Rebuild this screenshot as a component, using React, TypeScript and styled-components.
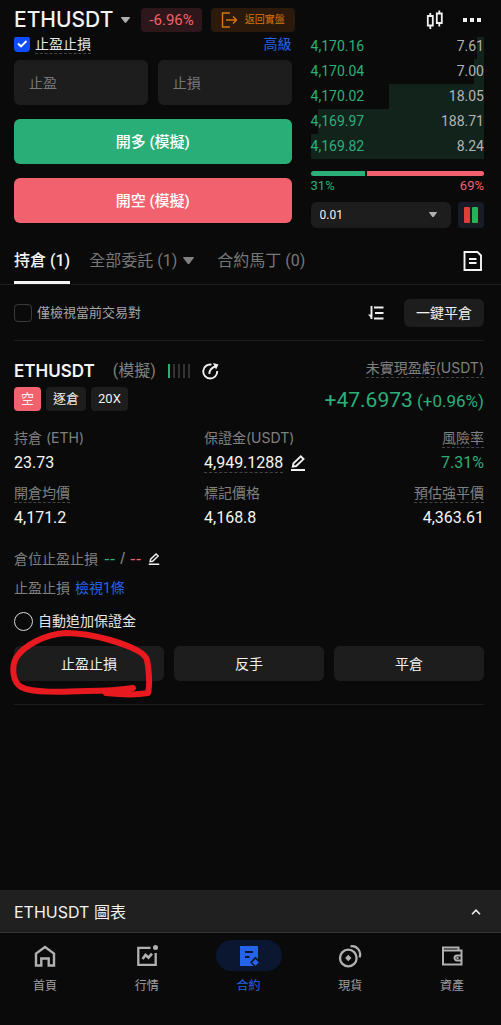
import React from "react";
import styled, { createGlobalStyle } from "styled-components";

const GlobalStyle = createGlobalStyle`
  * { box-sizing: border-box; }
  body {
    margin: 0;
    background: #0a0a0a;
    color: #f2f2f2;
    font-family: Roboto, "Noto Sans CJK TC", sans-serif;
    font-size: 14px;
    line-height: 20px;
  }
  button, input, select { font: inherit; color: inherit; }
  button { border: 0; padding: 0; background: none; cursor: pointer; }
  svg { display: block; flex: none; }
  a { text-decoration: none; }
`;

const GREEN = "#2bb07a";
const RED = "#f2616e";
const BLUE = "#2563eb";

const Page = styled.div`
  display: flex;
  flex-direction: column;
  min-height: 100vh;
`;

const Header = styled.header`
  position: sticky;
  top: 0;
  z-index: 2;
  display: flex;
  align-items: center;
  height: 37px;
  padding: 3px 20px 0 14px;
  background: #0a0a0a;
`;

const PairButton = styled.button`
  display: flex;
  align-items: center;
  gap: 8px;
  margin-right: 11px;
  font-family: Inter, sans-serif;
  font-size: 21px;
  font-weight: 500;
  line-height: 24px;
`;

const Badge = styled.span`
  padding: 0 8px;
  border-radius: 4px;
  background: #2e171b;
  color: ${RED};
  font-size: 15px;
  line-height: 24px;
`;

const LiveButton = styled.button`
  display: flex;
  align-items: center;
  gap: 7px;
  height: 24px;
  margin-left: 9px;
  padding: 0 10px;
  border-radius: 4px;
  background: #2b1a0c;
  color: #d9730d;
  font-size: 10px;
`;

const HeaderTools = styled.div`
  display: flex;
  align-items: center;
  gap: 19px;
  margin-left: auto;
`;

const IconButton = styled.button`
  display: flex;
  align-items: center;
`;

const Trade = styled.section`
  display: grid;
  grid-template-columns: 8fr 5fr;
  gap: 19px;
  margin-top: -3px;
  padding: 0 17px 0 14px;
`;

const OrderForm = styled.form`
  display: flex;
  flex-direction: column;
  min-width: 0;
`;

const Between = styled.div`
  display: flex;
  align-items: center;
  justify-content: space-between;
`;

const CheckLabel = styled.label<{ $small?: boolean }>`
  display: flex;
  align-items: center;
  gap: 5px;
  font-size: ${(p) => (p.$small ? 13 : 14)}px;
  color: ${(p) => (p.$small ? "#a6a6a6" : "#e6e6e6")};
`;

const Dotted = styled.span`
  display: inline-block;
  border-bottom: 1px dashed #444;
  line-height: 18px;
`;

const CheckBox = styled.input`
  appearance: none;
  width: 18px;
  height: 18px;
  margin: 0;
  border: 1px solid #3a3a3a;
  border-radius: 4px;
  &:checked {
    width: 16px;
    height: 16px;
    border: 0;
    background: #0b4dff
      url("data:image/svg+xml,%3Csvg xmlns='http://www.w3.org/2000/svg' viewBox='0 0 16 16'%3E%3Cpath d='M4 7.500l3 3L12.500 5' fill='none' stroke='white' stroke-width='1.800'/%3E%3C/svg%3E");
  }
`;

const TextLink = styled.a`
  color: ${BLUE};
`;

const Fields = styled.div`
  display: grid;
  grid-template-columns: 1fr 1fr;
  gap: 10px;
  margin: 6px 0 14px;
`;

const Field = styled.input`
  width: 100%;
  height: 45px;
  padding: 0 15px;
  border: 0;
  border-radius: 6px;
  background: #1d1d1d;
  &::placeholder { color: #777; opacity: 1; }
`;

const OrderButton = styled.button<{ $short?: boolean }>`
  height: 45px;
  margin-bottom: 14px;
  border-radius: 6px;
  background: ${(p) => (p.$short ? RED : "#2aae78")};
  color: #fff;
  font-size: 15px;
  font-weight: 500;
`;

const Book = styled.div`
  display: flex;
  flex-direction: column;
  min-width: 0;
`;

const BookRow = styled.div`
  display: flex;
  justify-content: space-between;
  color: #b3b3b3;
  line-height: 25px;
`;

const Price = styled.span`
  color: ${GREEN};
`;

const Loss = styled.span`
  color: ${RED};
`;

const Ratio = styled.div`
  display: grid;
  grid-template-columns: 31fr 67fr;
  gap: 2px;
  margin-top: 12px;
`;

const RatioBar = styled.span<{ $sell?: boolean }>`
  height: 5px;
  border-radius: ${(p) => (p.$sell ? "0 3px 3px 0" : "3px 0 0 3px")};
  background: ${(p) => (p.$sell ? RED : GREEN)};
`;

const RatioText = styled(Between)`
  margin-bottom: 6px;
  font-size: 13px;
`;

const StepRow = styled.div`
  display: flex;
  gap: 7px;
`;

const StepBox = styled.div`
  position: relative;
  flex: 1;
  svg { position: absolute; right: 14px; top: 10px; pointer-events: none; }
`;

const StepSelect = styled.select`
  appearance: none;
  width: 100%;
  height: 26px;
  padding: 0 9px;
  border: 0;
  border-radius: 6px;
  background: #1d1d1d;
  font-size: 12px;
`;

const BookMode = styled.button`
  display: flex;
  align-items: center;
  justify-content: center;
  width: 26px;
  height: 26px;
  border-radius: 4px;
  background: #181c27;
`;

const Tabs = styled.nav`
  display: flex;
  align-items: center;
  gap: 19px;
  height: 48px;
  padding: 0 18px 0 14px;
  border-bottom: 1px solid #1d1d1d;
`;

const Tab = styled.button<{ $active?: boolean }>`
  display: flex;
  align-items: center;
  gap: 6px;
  height: 47px;
  border-top: 4px solid transparent;
  border-bottom: 3px solid ${(p) => (p.$active ? "#f5f5f5" : "transparent")};
  color: ${(p) => (p.$active ? "#f5f5f5" : "#777")};
  font-size: 16px;
  font-weight: ${(p) => (p.$active ? 500 : 400)};
  &:nth-child(3) { margin-left: 4px; }
  &:last-child { margin-left: auto; color: #f5f5f5; }
`;

const Filter = styled.div`
  display: flex;
  align-items: center;
  margin: 0 17px 0 14px;
  padding: 14px 0 13px;
  border-bottom: 1px solid #1d1d1d;
`;

const CloseAll = styled.button`
  height: 28px;
  margin-left: 20px;
  padding: 0 12px;
  border-radius: 6px;
  background: #1d1d1d;
`;

const Spacer = styled.span`
  flex: 1;
`;

const Position = styled.article`
  margin: 0 17px 0 14px;
  padding-bottom: 23px;
  border-bottom: 1px solid #1d1d1d;
`;

const Summary = styled(Between)`
  align-items: flex-start;
  padding-top: 18px;
`;

const TitleRow = styled.div`
  display: flex;
  align-items: center;
  height: 24px;
  font-size: 16px;
  color: #808080;
`;

const Symbol = styled.h2`
  margin: 0 18px 0 0;
  color: #f5f5f5;
  font-family: Inter, sans-serif;
  font-size: 17px;
  font-weight: 600;
`;

const Level = styled.span`
  display: flex;
  gap: 3px;
  margin: 0 12px;
`;

const Tick = styled.i<{ $on?: boolean }>`
  width: 2px;
  height: 14px;
  background: ${(p) => (p.$on ? GREEN : "#333")};
`;

const Tags = styled.div`
  display: flex;
  gap: 5px;
  margin-top: 4px;
`;

const Tag = styled.span<{ $short?: boolean }>`
  padding: 0 7px;
  border-radius: 4px;
  background: ${(p) => (p.$short ? RED : "#1d1d1d")};
  font-size: 13px;
  line-height: 24px;
`;

const Profit = styled.div`
  display: flex;
  flex-direction: column;
  align-items: flex-end;
  color: #808080;
  font-family: Inter, "Noto Sans CJK TC", sans-serif;
`;

const ProfitValue = styled.div`
  margin-top: 10px;
  color: ${GREEN};
  font-family: Roboto, sans-serif;
  font-size: 17px;
  line-height: 24px;
  strong { font-size: 21px; font-weight: 400; }
`;

const Stats = styled.dl`
  display: grid;
  grid-template-columns: 190fr 140fr 140fr;
  row-gap: 8px;
  margin: 15px 0 0;
`;

const Stat = styled.div`
  display: flex;
  flex-direction: column;
  align-items: flex-start;
  &:nth-child(3n) { align-items: flex-end; }
`;

const StatName = styled.dt`
  height: 20px;
  color: #808080;
  font-family: Inter, "Noto Sans CJK TC", sans-serif;
`;

const StatValue = styled.dd<{ $up?: boolean }>`
  display: flex;
  align-items: center;
  gap: 7px;
  min-height: 24px;
  margin: 3px 0 0;
  color: ${(p) => (p.$up ? GREEN : "#f5f5f5")};
  font-size: 16px;
  line-height: 24px;
`;

const Line = styled.div`
  display: flex;
  align-items: center;
  gap: 5px;
  margin-top: 9px;
  color: #808080;
`;

const StopLines = styled.div`
  margin: 19px 0 13px;
`;

const StopValue = styled.span`
  display: flex;
  gap: 5px;
  margin: 0 2px 0 1px;
  font-family: "Liberation Sans", sans-serif;
  font-size: 17px;
`;

const Radio = styled.input`
  appearance: none;
  width: 19px;
  height: 19px;
  margin: 0;
  border: 1px solid #d9d9d9;
  border-radius: 50%;
`;

const Actions = styled.div`
  position: relative;
  display: grid;
  grid-template-columns: repeat(3, 1fr);
  gap: 10px;
  margin-top: 15px;
`;

const Action = styled.button`
  height: 35px;
  border-radius: 6px;
  background: #1d1d1d;
`;

const Marker = styled.svg`
  position: absolute;
  left: -14px;
  top: -24px;
  pointer-events: none;
`;

const Bottom = styled.footer`
  position: sticky;
  bottom: 0;
  margin-top: auto;
  background: #0a0a0a;
`;

const ChartBar = styled.button`
  display: flex;
  align-items: center;
  justify-content: space-between;
  width: 100%;
  height: 43px;
  padding: 1px 20px 0 14px;
  border-bottom: 1px solid #363636;
  background: #202020;
  font-family: Inter, "Noto Sans CJK TC", sans-serif;
  font-size: 16px;
`;

const NavBar = styled.nav`
  display: flex;
  justify-content: space-between;
  height: 92px;
  padding: 7px 16px 0 12px;
`;

const NavItem = styled.a<{ $active?: boolean }>`
  display: flex;
  flex-direction: column;
  align-items: center;
  gap: 5px;
  width: 66px;
  color: ${(p) => (p.$active ? BLUE : "#a0a0a0")};
  font-size: 12px;
`;

const Pill = styled.span<{ $active?: boolean }>`
  display: flex;
  align-items: center;
  justify-content: center;
  width: 100%;
  height: 31px;
  border-radius: 16px;
  background: ${(p) => (p.$active ? "#0b1730" : "transparent")};
`;

const Caret = ({ size = 9, color = "#b0b0b0" }) => (
  <svg width={size} height={size * 0.67} viewBox="0 0 9 6" fill={color}>
    <path d="M.6 0h7.800q.9.100.4.900L5.200 5.500q-.7.800-1.400 0L.2.900Q-.3.100.6 0z" />
  </svg>
);

const Pencil = ({ size = 16 }) => (
  <svg width={size} height={size} viewBox="0 0 16 16" fill="none" stroke="#f0f0f0" strokeWidth="1.900">
    <path d="M1 15h14M2.800 11.600l.7-3.400L10.800 1.400l2.700 2.700-7.300 6.900z" />
  </svg>
);

const book = [
  { price: "4,170.16", size: "7.61", depth: 4 },
  { price: "4,170.04", size: "7.00", depth: 6 },
  { price: "4,170.02", size: "18.05", depth: 55 },
  { price: "4,169.97", size: "188.71", depth: 96 },
  { price: "4,169.82", size: "8.24", depth: 100 },
];

const navIcons = {
  home: (
    <svg width="22" height="22" viewBox="0 0 22 22" fill="none" stroke="#b0b0b0" strokeWidth="2.400">
      <path d="M2 20.500V8.500L11 2l9 6.500v12h-5.300v-7H7.300v7z" />
    </svg>
  ),
  market: (
    <svg width="22" height="22" viewBox="0 0 22 22" fill="none" stroke="#b0b0b0" strokeWidth="2.300">
      <path d="M14.500 2.900H2.300v17h17.400V8" />
      <path d="M6.500 14l3-4 3 2.600 3.500-4" strokeWidth="2.600" />
      <circle cx="19.500" cy="2.600" r="2.500" fill="#b0b0b0" stroke="none" />
    </svg>
  ),
  contract: (
    <svg width="22" height="22" viewBox="0 0 22 22">
      <path d="M2 1h18v20H2z" fill={BLUE} />
      <path d="M7 7h8M7 12h4.500" stroke="#0b1730" strokeWidth="1.900" />
      <path d="M17.500 11.500l5.500 5.800-5.500 5.700-5.500-5.700z" fill="#0b1730" />
      <path d="M17.500 14l3.300 3.400-3.300 3.400-3.300-3.400z" fill={BLUE} />
    </svg>
  ),
  spot: (
    <svg width="24" height="24" viewBox="0 0 24 24" fill="none" stroke="#b0b0b0" strokeWidth="2.300">
      <circle cx="10.300" cy="14" r="8.300" />
      <path d="M12.500 2.400c6-1.400 11.500 5 9 11" />
      <path d="M10.300 10.800l3.200 3.200-3.200 3.200L7.100 14z" fill="#b0b0b0" stroke="none" />
    </svg>
  ),
  assets: (
    <svg width="22" height="22" viewBox="0 0 22 22" fill="none" stroke="#b0b0b0" strokeWidth="2">
      <path d="M17.500 5.500V2.500H2v17h18.500V5.500H3" />
      <path d="M20 10.500h-4a2.500 2.500 0 0 0 0 5h4M15.500 13h2" />
    </svg>
  ),
};

const nav: { name: string; icon: keyof typeof navIcons; active?: boolean }[] = [
  { name: "首頁", icon: "home" },
  { name: "行情", icon: "market" },
  { name: "合約", icon: "contract", active: true },
  { name: "現貨", icon: "spot" },
  { name: "資產", icon: "assets" },
];

export default function App() {
  return (
    <Page>
      <GlobalStyle />
      <Header>
        <PairButton>
          ETHUSDT <Caret />
        </PairButton>
        <Badge>-6.96%</Badge>
        <LiveButton>
          <svg width="17" height="16" viewBox="0 0 17 16" fill="none" stroke="currentColor" strokeWidth="1.400">
            <path d="M9 1H1.500v14H9M5 8h10.500M12 4.500L15.500 8 12 11.500" />
          </svg>
          返回實盤
        </LiveButton>
        <HeaderTools>
          <IconButton aria-label="K線">
            <svg width="18" height="20" viewBox="0 0 18 20" fill="none" stroke="#f0f0f0" strokeWidth="1.800">
              <path d="M1.800 6h5v9.500h-5zM4.300 3v3M4.300 15.500v3.500M10.800 3.500h5v9.500h-5zM13.300.5v3M13.300 13v3.500" />
            </svg>
          </IconButton>
          <IconButton aria-label="更多">
            <svg width="18" height="4" viewBox="0 0 18 4" fill="#f0f0f0">
              <path d="M0 0h4v4H0zM7 0h4v4H7zM14 0h4v4h-4z" />
            </svg>
          </IconButton>
        </HeaderTools>
      </Header>

      <Trade>
        <OrderForm onSubmit={(e) => e.preventDefault()}>
          <Between>
            <CheckLabel>
              <CheckBox type="checkbox" defaultChecked />
              <Dotted>止盈止損</Dotted>
            </CheckLabel>
            <TextLink href="#advanced">高級</TextLink>
          </Between>
          <Fields>
            <Field placeholder="止盈" aria-label="止盈" />
            <Field placeholder="止損" aria-label="止損" />
          </Fields>
          <OrderButton>開多 (模擬)</OrderButton>
          <OrderButton $short>開空 (模擬)</OrderButton>
        </OrderForm>
        <Book>
          {book.map((r) => (
            <BookRow
              key={r.price}
              style={{ background: `linear-gradient(to left, #11231b ${r.depth}%, transparent ${r.depth}%)` }}
            >
              <Price>{r.price}</Price>
              <span>{r.size}</span>
            </BookRow>
          ))}
          <Ratio>
            <RatioBar />
            <RatioBar $sell />
          </Ratio>
          <RatioText>
            <Price>31%</Price>
            <Loss>69%</Loss>
          </RatioText>
          <StepRow>
            <StepBox>
              <StepSelect aria-label="深度" defaultValue="0.01">
                <option>0.01</option>
              </StepSelect>
              <Caret size={8} />
            </StepBox>
            <BookMode aria-label="盤口顯示">
              <svg width="14" height="16" viewBox="0 0 14 16">
                <rect width="6" height="16" rx="1" fill="#e03c3c" />
                <rect x="8" width="6" height="16" rx="1" fill="#22b558" />
              </svg>
            </BookMode>
          </StepRow>
        </Book>
      </Trade>

      <Tabs>
        <Tab $active>持倉 (1)</Tab>
        <Tab>
          全部委託 (1) <Caret size={11} color="#808080" />
        </Tab>
        <Tab>合約馬丁 (0)</Tab>
        <Tab aria-label="訂單記錄">
          <svg width="20" height="20" viewBox="0 0 20 20" fill="none" stroke="currentColor" strokeWidth="1.900">
            <path d="M1.500 1h13l3.500 3.500V19H1.500zM6 8h7.500M6 12h7.500" />
          </svg>
        </Tab>
      </Tabs>

      <Filter>
        <CheckLabel $small>
          <CheckBox type="checkbox" />
          僅檢視當前交易對
        </CheckLabel>
        <Spacer />
        <IconButton aria-label="排序">
          <svg width="16" height="14" viewBox="0 0 16 14" fill="none" stroke="#f0f0f0" strokeWidth="1.900">
            <path d="M3.500 0v13M6 1.500h9.500M7 7h8.500M6 12.500h9.500" />
            <path d="M0 8.500h4V13z" fill="#f0f0f0" stroke="none" />
          </svg>
        </IconButton>
        <CloseAll>一鍵平倉</CloseAll>
      </Filter>

      <Position>
        <Summary>
          <div>
            <TitleRow>
              <Symbol>ETHUSDT</Symbol>
              (模擬)
              <Level>
                <Tick $on />
                <Tick />
                <Tick />
                <Tick />
                <Tick />
              </Level>
              <IconButton aria-label="分享">
                <svg width="17" height="17" viewBox="0 0 17 17" fill="none" stroke="#f0f0f0" strokeWidth="1.900">
                  <path d="M9.500 1.600A7 7 0 1 0 15.200 8M7.300 11c0-4 2-6.500 7-8" />
                  <path d="M11 0l5.500 1.500L14 6.500z" fill="#f0f0f0" stroke="none" />
                </svg>
              </IconButton>
            </TitleRow>
            <Tags>
              <Tag $short>空</Tag>
              <Tag>逐倉</Tag>
              <Tag>20X</Tag>
            </Tags>
          </div>
          <Profit>
            <Dotted>未實現盈虧(USDT)</Dotted>
            <ProfitValue>
              <strong>+47.6973</strong> (+0.96%)
            </ProfitValue>
          </Profit>
        </Summary>
        <Stats>
          <Stat>
            <StatName>持倉 (ETH)</StatName>
            <StatValue>23.73</StatValue>
          </Stat>
          <Stat>
            <StatName>保證金(USDT)</StatName>
            <StatValue>
              <Dotted>4,949.1288</Dotted>
              <IconButton aria-label="調整保證金">
                <Pencil />
              </IconButton>
            </StatValue>
          </Stat>
          <Stat>
            <StatName>
              <Dotted>風險率</Dotted>
            </StatName>
            <StatValue $up>7.31%</StatValue>
          </Stat>
          <Stat>
            <StatName>
              <Dotted>開倉均價</Dotted>
            </StatName>
            <StatValue>4,171.2</StatValue>
          </Stat>
          <Stat>
            <StatName>標記價格</StatName>
            <StatValue>4,168.8</StatValue>
          </Stat>
          <Stat>
            <StatName>
              <Dotted>預估強平價</Dotted>
            </StatName>
            <StatValue>4,363.61</StatValue>
          </Stat>
        </Stats>
        <StopLines>
          <Line>
            倉位止盈止損
            <StopValue>
              <Price>--</Price>/<Loss>--</Loss>
            </StopValue>
            <IconButton aria-label="編輯止盈止損">
              <Pencil size={12} />
            </IconButton>
          </Line>
          <Line>
            止盈止損 <TextLink href="#orders">檢視1條</TextLink>
          </Line>
        </StopLines>
        <CheckLabel>
          <Radio type="radio" />
          自動追加保證金
        </CheckLabel>
        <Actions>
          <Action>止盈止損</Action>
          <Action>反手</Action>
          <Action>平倉</Action>
          <Marker width="160" height="80" viewBox="0 0 160 80" fill="none" stroke="#e8191f" strokeLinecap="round" strokeLinejoin="round">
            <path
              d="M106 71c14 1.500 31 2 42 0 2-8 1-24-1-33-2-8-20-15-37-20C96 14 80 11 66 11 46 12 24 23 16 36c-5 10-3 24 5 29 12 6 40 5 66 4 18 0 33-1 46-3"
              strokeWidth="6"
            />
          </Marker>
        </Actions>
      </Position>

      <Bottom>
        <ChartBar>
          ETHUSDT 圖表
          <svg width="10" height="6" viewBox="0 0 10 6" fill="none" stroke="#f0f0f0" strokeWidth="1.600">
            <path d="M1 5.200l4-4 4 4" />
          </svg>
        </ChartBar>
        <NavBar>
          {nav.map((n) => (
            <NavItem key={n.name} href={`#${n.icon}`} $active={n.active}>
              <Pill $active={n.active}>{navIcons[n.icon]}</Pill>
              {n.name}
            </NavItem>
          ))}
        </NavBar>
      </Bottom>
    </Page>
  );
}
